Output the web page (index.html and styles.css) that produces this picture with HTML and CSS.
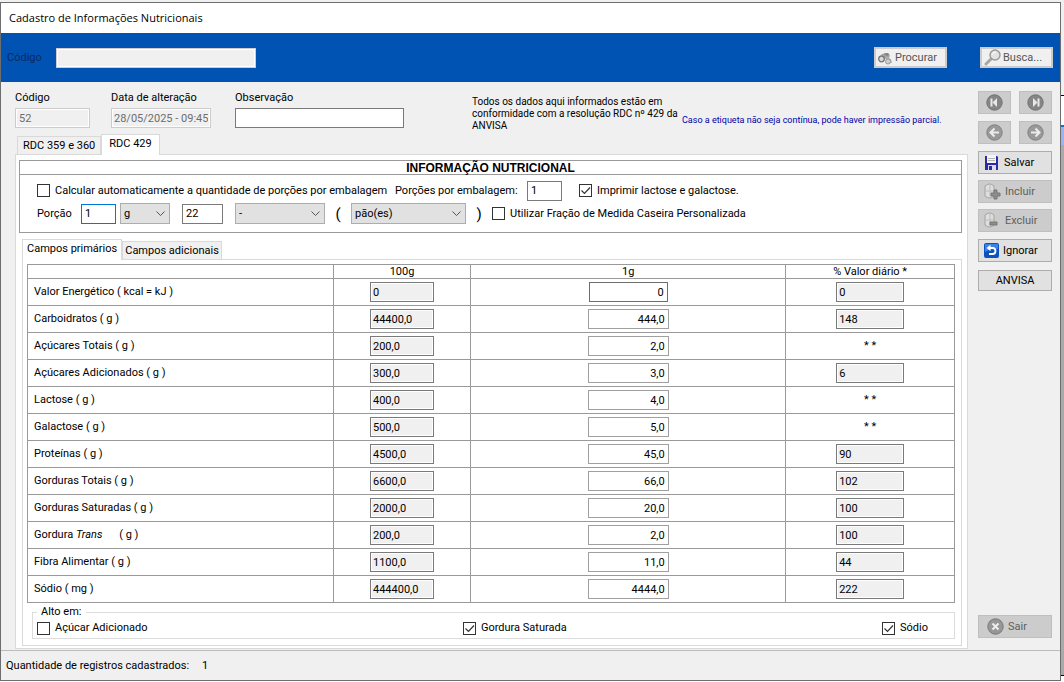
FILE: index.html
```
<!DOCTYPE html>
<html lang="pt-BR">
<head>
    <meta charset="UTF-8">
    <meta name="viewport" content="width=device-width, initial-scale=1.0">
    <title>Cadastro de Informações Nutricionais</title>
    <link rel="stylesheet" href="styles.css">
</head>
<body>
    <div class="window">
        <h1 class="title-bar">Cadastro de Informações Nutricionais</h1>

        <header class="search-bar">
            <label for="search-code">Código</label>
            <input class="field disabled search-input" id="search-code" type="text" disabled>
            <button class="search-button" type="button" disabled>
                <svg width="15" height="15" viewBox="0 0 15 15">
                    <path d="M1 7 L4 4 L9 3 L12 5 L11 8 L7 9 Z" fill="#a4a4a4"/>
                    <path d="M8 7 L13 9 L14 13 L8 13 Z" fill="#b4b4b4"/>
                    <circle cx="3.5" cy="9" r="2.800" fill="#dadada" stroke="#777" stroke-width="1.300"/>
                    <circle cx="10" cy="11.500" r="2.500" fill="#d0d0d0" stroke="#999"/>
                    <path d="M6 4 L11 4 M9 3 V6" stroke="#777"/>
                </svg>
                Procurar
            </button>
            <button class="search-button" type="button" disabled>
                <svg width="17" height="17" viewBox="0 0 17 17">
                    <path d="M2 15 L7 10" stroke="#a6a6a6" stroke-width="3" stroke-linecap="round"/>
                    <circle cx="11" cy="6" r="5" fill="#e2e2e2" stroke="#999" stroke-width="1.4"/>
                    <path d="M8 6 Q9 3 12 3" fill="none" stroke="#fff"/>
                </svg>
                Busca...
            </button>
        </header>

        <div class="content">
            <main class="main">
                <div class="record">
                    <div class="group group-code">
                        <label for="code">Código</label>
                        <input class="field disabled" id="code" type="text" value="52" disabled>
                    </div>
                    <div class="group group-date">
                        <label for="date">Data de alteração</label>
                        <input class="field disabled" id="date" type="text" value="28/05/2025 - 09:45" disabled>
                    </div>
                    <div class="group group-note">
                        <label for="note">Observação</label>
                        <input class="field" id="note" type="text">
                    </div>
                    <p class="legal">Todos os dados aqui informados estão em conformidade com a resolução RDC nº 429 da ANVISA</p>
                    <p class="warning">Caso a etiqueta não seja contínua, pode haver impressão parcial.</p>
                </div>

                <div class="tabs" role="tablist">
                    <button class="tab" type="button" role="tab">RDC 359 e 360</button>
                    <button class="tab active" type="button" role="tab" aria-selected="true">RDC 429</button>
                </div>

                <section class="panel">
                    <div class="info">
                        <h2>INFORMAÇÃO NUTRICIONAL</h2>
                        <div class="info-row">
                            <label class="check check-auto"><input type="checkbox">Calcular automaticamente a quantidade de porções por embalagem</label>
                            <label class="per-pack-label" for="per-pack">Porções por embalagem:</label>
                            <input class="field short" id="per-pack" type="text" value="1">
                            <label class="check check-print"><input type="checkbox" checked>Imprimir lactose e galactose.</label>
                        </div>
                        <div class="info-row">
                            <label class="portion-label" for="portion">Porção</label>
                            <input class="field short focused" id="portion" type="text" value="1">
                            <select class="unit" aria-label="Unidade"><option>g</option></select>
                            <input class="field amount" type="text" value="22" aria-label="Quantidade">
                            <select class="fraction" aria-label="Fração"><option>-</option></select>
                            <span class="paren">(</span>
                            <select class="measure" aria-label="Medida caseira"><option>pão(es)</option></select>
                            <span class="paren">)</span>
                            <label class="check check-fraction"><input type="checkbox">Utilizar Fração de Medida Caseira Personalizada</label>
                        </div>
                    </div>

                    <div class="tabs inner-tabs" role="tablist">
                        <button class="tab active" type="button" role="tab" aria-selected="true">Campos primários</button>
                        <button class="tab" type="button" role="tab">Campos adicionais</button>
                    </div>

                    <div class="panel inner-panel">
                        <table class="nutrients">
                            <colgroup>
                                <col class="col-name">
                                <col class="col-100">
                                <col class="col-portion">
                                <col class="col-daily">
                            </colgroup>
                            <thead>
                                <tr><th></th><th>100g</th><th>1g</th><th>% Valor diário *</th></tr>
                            </thead>
                            <tbody>
                                <tr>
                                    <th scope="row">Valor Energético ( kcal = kJ )</th>
                                    <td><input class="field readonly" value="0" aria-label="Valor energético 100g" readonly></td>
                                    <td><input class="field portion first" value="0" aria-label="Valor energético porção"></td>
                                    <td><input class="field readonly daily" value="0" aria-label="Valor energético diário" readonly></td>
                                </tr>
                                <tr>
                                    <th scope="row">Carboidratos ( g )</th>
                                    <td><input class="field readonly" value="44400,0" aria-label="Carboidratos 100g" readonly></td>
                                    <td><input class="field portion" value="444,0" aria-label="Carboidratos porção"></td>
                                    <td><input class="field readonly daily" value="148" aria-label="Carboidratos diário" readonly></td>
                                </tr>
                                <tr>
                                    <th scope="row">Açúcares Totais ( g )</th>
                                    <td><input class="field readonly" value="200,0" aria-label="Açúcares totais 100g" readonly></td>
                                    <td><input class="field portion" value="2,0" aria-label="Açúcares totais porção"></td>
                                    <td>* *</td>
                                </tr>
                                <tr>
                                    <th scope="row">Açúcares Adicionados ( g )</th>
                                    <td><input class="field readonly" value="300,0" aria-label="Açúcares adicionados 100g" readonly></td>
                                    <td><input class="field portion" value="3,0" aria-label="Açúcares adicionados porção"></td>
                                    <td><input class="field readonly daily" value="6" aria-label="Açúcares adicionados diário" readonly></td>
                                </tr>
                                <tr>
                                    <th scope="row">Lactose ( g )</th>
                                    <td><input class="field readonly" value="400,0" aria-label="Lactose 100g" readonly></td>
                                    <td><input class="field portion" value="4,0" aria-label="Lactose porção"></td>
                                    <td>* *</td>
                                </tr>
                                <tr>
                                    <th scope="row">Galactose ( g )</th>
                                    <td><input class="field readonly" value="500,0" aria-label="Galactose 100g" readonly></td>
                                    <td><input class="field portion" value="5,0" aria-label="Galactose porção"></td>
                                    <td>* *</td>
                                </tr>
                                <tr>
                                    <th scope="row">Proteínas ( g )</th>
                                    <td><input class="field readonly" value="4500,0" aria-label="Proteínas 100g" readonly></td>
                                    <td><input class="field portion" value="45,0" aria-label="Proteínas porção"></td>
                                    <td><input class="field readonly daily" value="90" aria-label="Proteínas diário" readonly></td>
                                </tr>
                                <tr>
                                    <th scope="row">Gorduras Totais ( g )</th>
                                    <td><input class="field readonly" value="6600,0" aria-label="Gorduras totais 100g" readonly></td>
                                    <td><input class="field portion" value="66,0" aria-label="Gorduras totais porção"></td>
                                    <td><input class="field readonly daily" value="102" aria-label="Gorduras totais diário" readonly></td>
                                </tr>
                                <tr>
                                    <th scope="row">Gorduras Saturadas ( g )</th>
                                    <td><input class="field readonly" value="2000,0" aria-label="Gorduras saturadas 100g" readonly></td>
                                    <td><input class="field portion" value="20,0" aria-label="Gorduras saturadas porção"></td>
                                    <td><input class="field readonly daily" value="100" aria-label="Gorduras saturadas diário" readonly></td>
                                </tr>
                                <tr>
                                    <th scope="row">Gordura <em>Trans</em> ( g )</th>
                                    <td><input class="field readonly" value="200,0" aria-label="Gordura trans 100g" readonly></td>
                                    <td><input class="field portion" value="2,0" aria-label="Gordura trans porção"></td>
                                    <td><input class="field readonly daily" value="100" aria-label="Gordura trans diário" readonly></td>
                                </tr>
                                <tr>
                                    <th scope="row">Fibra Alimentar ( g )</th>
                                    <td><input class="field readonly" value="1100,0" aria-label="Fibra alimentar 100g" readonly></td>
                                    <td><input class="field portion" value="11,0" aria-label="Fibra alimentar porção"></td>
                                    <td><input class="field readonly daily" value="44" aria-label="Fibra alimentar diário" readonly></td>
                                </tr>
                                <tr>
                                    <th scope="row">Sódio ( mg )</th>
                                    <td><input class="field readonly" value="444400,0" aria-label="Sódio 100g" readonly></td>
                                    <td><input class="field portion" value="4444,0" aria-label="Sódio porção"></td>
                                    <td><input class="field readonly daily" value="222" aria-label="Sódio diário" readonly></td>
                                </tr>
                            </tbody>
                        </table>

                        <fieldset class="high-in">
                            <legend>Alto em:</legend>
                            <div class="high-in-options">
                                <label class="check"><input type="checkbox">Açúcar Adicionado</label>
                                <label class="check"><input type="checkbox" checked>Gordura Saturada</label>
                                <label class="check"><input type="checkbox" checked>Sódio</label>
                            </div>
                        </fieldset>
                    </div>
                </section>
            </main>

            <aside class="sidebar">
                <div class="nav">
                    <button class="action" type="button" aria-label="Primeiro" disabled>
                        <svg width="17" height="17" viewBox="0 0 17 17">
                            <circle cx="8.5" cy="8.5" r="7.7" fill="#858585" stroke="#727272"/>
                            <path d="M5.5 4.5 V12.5" stroke="#e8e8e8" stroke-width="2"/>
                            <path d="M11 4 V13 L6.500 8.5 Z" fill="#e8e8e8"/>
                        </svg>
                    </button>
                    <button class="action" type="button" aria-label="Último" disabled>
                        <svg width="17" height="17" viewBox="0 0 17 17">
                            <circle cx="8.5" cy="8.5" r="7.7" fill="#858585" stroke="#727272"/>
                            <path d="M11.5 4.5 V12.5" stroke="#e8e8e8" stroke-width="2"/>
                            <path d="M6 4 V13 L10.500 8.5 Z" fill="#e8e8e8"/>
                        </svg>
                    </button>
                    <button class="action" type="button" aria-label="Anterior" disabled>
                        <svg width="17" height="17" viewBox="0 0 17 17">
                            <circle cx="8.5" cy="8.5" r="7.7" fill="#999" stroke="#808080"/>
                            <path d="M13 8.5 H5 M8.5 4.5 L4.5 8.5 L8.5 12.5" fill="none" stroke="#ececec" stroke-width="2"/>
                        </svg>
                    </button>
                    <button class="action" type="button" aria-label="Próximo" disabled>
                        <svg width="17" height="17" viewBox="0 0 17 17">
                            <circle cx="8.5" cy="8.5" r="7.7" fill="#999" stroke="#808080"/>
                            <path d="M4 8.5 H12 M8.5 4.5 L12.5 8.5 L8.5 12.5" fill="none" stroke="#ececec" stroke-width="2"/>
                        </svg>
                    </button>
                </div>
                <button class="action" type="button">
                    <svg width="16" height="16" viewBox="0 0 16 16">
                        <path d="M1 1 H13 L14 2 V15 H1 Z" fill="#2b2ba6"/>
                        <path d="M3 0 H12 V8 H3 Z" fill="#f4f4f4"/>
                        <path d="M4 3.5 H11 M4 5.5 H11" stroke="#b5b5b5"/>
                        <path d="M4 10 H12 V15 H4 Z" fill="#dcdcec"/>
                        <path d="M5 11 H8 V15 H5 Z" fill="#2b2ba6"/>
                    </svg>
                    Salvar
                </button>
                <button class="action" type="button" disabled>
                    <svg width="17" height="17" viewBox="0 0 17 17">
                        <path d="M1 3 Q5.500 -1 10 3 V13 Q5.500 17 1 13 Z" fill="#dedede" stroke="#a2a2a2"/>
                        <path d="M1 8 H10 M6 2 V14" stroke="#bcbcbc"/>
                        <path d="M10 7 H13 V10 H16 V13 H13 V16 H10 V13 H7 V10 H10 Z" fill="#8d8d8d" stroke="#777"/>
                    </svg>
                    Incluir
                </button>
                <button class="action" type="button" disabled>
                    <svg width="17" height="17" viewBox="0 0 17 17">
                        <path d="M1 3 Q5.500 -1 10 3 V13 Q5.500 17 1 13 Z" fill="#dedede" stroke="#a2a2a2"/>
                        <path d="M1 8 H10 M6 2 V14" stroke="#bcbcbc"/>
                        <path d="M6 10 H13 V13 H6 Z" fill="#8d8d8d" stroke="#777"/>
                    </svg>
                    Excluir
                </button>
                <button class="action action-ignore" type="button">
                    <svg width="15" height="15" viewBox="0 0 15 15">
                        <rect width="15" height="15" rx="2" fill="#0c51c0"/>
                        <path d="M1 1 H14 V6 Q7 5 1 9 Z" fill="#3a83e8"/>
                        <path d="M4 5 H8.500 Q11.500 5 11.500 8 T8.500 11 H5" fill="none" stroke="#fff" stroke-width="1.800"/>
                        <path d="M2.500 5 L6.500 1.800 V8.200 Z" fill="#fff"/>
                    </svg>
                    Ignorar
                </button>
                <button class="action action-anvisa" type="button">ANVISA</button>
                <button class="action action-exit" type="button" disabled>
                    <svg width="17" height="17" viewBox="0 0 17 17">
                        <circle cx="8.5" cy="8.5" r="7.7" fill="#979797" stroke="#777"/>
                        <path d="M5.500 5.500 L11.500 11.500 M11.500 5.500 L5.500 11.500" stroke="#eee" stroke-width="2"/>
                    </svg>
                    Sair
                </button>
            </aside>
        </div>

        <footer class="status-bar">
            <span>Quantidade de registros cadastrados:</span>
            <span>1</span>
        </footer>
    </div>
</body>
</html>
```
FILE: styles.css
```
* {
    box-sizing: border-box;
}

body {
    margin: 0;
    padding: 2px 3px 1px 0;
    height: 100vh;
    font-family: Roboto, "Liberation Sans", Arial, sans-serif;
    font-size: 11px;
    line-height: 14px;
    color: #000;
    background: linear-gradient(#f0f0f0 95px, #000 95px, #000 96px, #fff 96px, #fff 125px, #0078d7 125px, #0078d7 127px, #99b4f0 127px, #99b4f0 145px, #aaa 145px, #aaa 675px, #000 675px, #000 676px, #fff 676px);
}

h1, h2, p {
    margin: 0;
}

button, input, select {
    font-family: inherit;
    font-size: 11px;
    color: inherit;
}

svg {
    flex: none;
}

.window {
    display: flex;
    flex-direction: column;
    min-height: 100%;
    background-color: #f0f0f0;
    border: 1px solid #6e6e6e;
}

.title-bar {
    height: 30px;
    padding-left: 8px;
    line-height: 30px;
    font-family: "Open Sans", "Noto Sans", sans-serif;
    font-size: 11px;
    font-weight: normal;
    background-color: #fff;
}

/* inputs */
.field {
    width: 100%;
    height: 20px;
    padding: 0 3px;
    border: 1px solid #7a7a7a;
    border-radius: 0;
    background-color: #fff;
    outline: none;
}

.disabled {
    border-color: #ccc;
    background-color: #f0f0f0;
    box-shadow: inset 0 0 0 1px #fff;
    color: #6d6d6d;
}

.focused {
    border-color: #0078d7;
}

.short {
    width: 35px;
}

.amount {
    width: 41px;
}

select {
    appearance: none;
    height: 21px;
    padding: 0 3px;
    border: 1px solid #adadad;
    border-radius: 0;
    background: #e1e1e1 url("data:image/svg+xml,%3Csvg xmlns='http://www.w3.org/2000/svg' width='9' height='6'%3E%3Cpath d='M0.5 0.5L4.5 4.500L8.5 0.5' fill='none' stroke='%23555'/%3E%3C/svg%3E") no-repeat right 4px center;
}

.check {
    display: flex;
    align-items: center;
    gap: 5px;
    white-space: nowrap;
}

.check input {
    appearance: none;
    width: 13px;
    height: 13px;
    margin: 0;
    border: 1px solid #333;
    background-color: #fff;
}

.check input:checked {
    background-image: url("data:image/svg+xml,%3Csvg xmlns='http://www.w3.org/2000/svg' width='11' height='11'%3E%3Cpath d='M1.500 5.500L4.500 8.500L10 2.500' fill='none' stroke='%23333' stroke-width='1.200'/%3E%3C/svg%3E");
}

/* blue bar */
.search-bar {
    display: flex;
    align-items: center;
    height: 49px;
    padding: 0 7px 0 6px;
    background-color: #0053b3;
    color: #0b2a5c;
}

.search-bar label {
    width: 49px;
}

.search-input {
    width: 200px;
    margin-right: auto;
}

.search-button {
    display: flex;
    align-items: center;
    gap: 2px;
    width: 73px;
    height: 21px;
    margin-left: 33px;
    padding: 0 2px;
    border: 2px solid #ccc;
    background-color: #f0f0f0;
    color: #555;
    white-space: nowrap;
}

.content {
    display: flex;
    flex: 1;
    gap: 10px;
    padding: 9px 8px 0 14px;
}

.main {
    flex: 1;
}

/* record data */
.record {
    display: flex;
    align-items: flex-start;
    height: 43px;
}

.group {
    display: flex;
    flex-direction: column;
    gap: 3px;
}

.group-code {
    width: 75px;
    margin-right: 21px;
}

.group-date {
    width: 100px;
    margin-right: 24px;
}

.group-date .field {
    padding: 0 2px;
}

.group-note {
    width: 169px;
    margin-right: 68px;
}

.legal {
    flex: none;
    width: 208px;
    margin-top: 5px;
    margin-right: 2px;
    font-size: 10px;
    line-height: 12px;
}

.warning {
    margin-top: 22px;
    font-size: 9px;
    white-space: nowrap;
    color: #0000a8;
}

/* tabs */
.tabs {
    display: flex;
    align-items: flex-end;
    padding-left: 2px;
}

.tab {
    height: 18px;
    padding: 0 5px;
    border: 1px solid #d9d9d9;
    border-bottom: 0;
    background-color: #f0f0f0;
}

.tab.active {
    z-index: 1;
    height: 21px;
    margin-bottom: -1px;
    padding: 0 7px 3px;
    background-color: #fff;
}

.panel {
    padding: 5px 5px 2px 3px;
    border: 1px solid #d9d9d9;
    background-color: #fff;
}

.info {
    height: 73px;
    border: 1px solid #9a9a9a;
}

.info h2 {
    height: 14px;
    margin-bottom: 4px;
    border-bottom: 1px solid #9a9a9a;
    font-family: "Liberation Sans", Arial, sans-serif;
    font-size: 12px;
    line-height: 14px;
    text-align: center;
}

.info-row {
    display: flex;
    align-items: center;
    height: 23px;
    padding-left: 17px;
    white-space: nowrap;
}

.check-auto {
    width: 358px;
}

.per-pack-label {
    width: 132px;
}

.check-print {
    margin-left: 17px;
}

.portion-label {
    width: 44px;
}

.unit {
    width: 50px;
    margin: 0 12px 0 4px;
}

.fraction {
    width: 90px;
    margin-left: 12px;
}

.measure {
    width: 115px;
}

.paren {
    width: 26px;
    font-size: 15px;
    text-align: center;
}

.inner-tabs {
    margin-top: 6px;
    padding-left: 3px;
}

.inner-tabs .tab {
    padding: 0 2px;
}

.inner-tabs .tab.active {
    padding: 0 4px 3px;
}

.inner-panel {
    margin-left: 3px;
    padding: 4px 6px 6px 4px;
}

/* nutrients */
.nutrients {
    width: 100%;
    border-collapse: collapse;
    table-layout: fixed;
}

.col-name {
    width: 33%;
}

.col-100 {
    width: 14.8%;
}

.col-portion {
    width: 34%;
}

.col-daily {
    width: 18.2%;
}

.nutrients th, .nutrients td {
    height: 27px;
    padding: 0;
    border: 1px solid #9a9a9a;
    font-weight: normal;
    text-align: center;
}

.nutrients thead th {
    height: 14px;
    line-height: 13px;
}

.nutrients tbody th {
    padding-left: 6px;
    text-align: left;
}

.nutrients em {
    margin-right: 14px;
}

.nutrients .field {
    display: block;
    width: 64px;
    margin: 0 auto;
}

.nutrients .readonly {
    padding: 0 2px;
    background-color: #f0f0f0;
    box-shadow: inset 0 0 0 1px #fff;
}

.nutrients .daily {
    width: 68px;
}

.nutrients .portion {
    width: 81px;
    border-color: #a0a0a0;
    text-align: right;
}

.nutrients .first {
    width: 79px;
    border-color: #6e6e6e;
}

.high-in {
    height: 34px;
    margin: 2px 0 0 5px;
    padding: 2px 26px 0 4px;
    border: 1px solid #dcdcdc;
}

.high-in legend {
    padding: 0 4px;
}

.high-in-options {
    display: flex;
    justify-content: space-between;
}

/* side buttons */
.sidebar {
    display: flex;
    flex-direction: column;
    gap: 6px;
    width: 74px;
    padding-bottom: 11px;
}

.nav {
    display: grid;
    grid-template-columns: 33px 33px;
    gap: 7px;
    justify-content: space-between;
    margin-bottom: 1px;
}

.action {
    display: flex;
    align-items: center;
    gap: 4px;
    height: 23px;
    padding: 0 5px;
    border: 1px solid #adadad;
    background-color: #e1e1e1;
}

.action:disabled {
    border-color: #bfbfbf;
    background-color: #ccc;
    color: #606060;
}

.nav .action {
    justify-content: center;
}

.action-ignore {
    margin-top: 1px;
}

.action-anvisa {
    justify-content: center;
    height: 21px;
    margin-top: 2px;
}

.action-exit {
    margin-top: auto;
    padding-left: 8px;
}

.status-bar {
    display: flex;
    gap: 13px;
    height: 30px;
    margin-top: 1px;
    padding-left: 5px;
    border-top: 1px solid #bcbcbc;
    line-height: 29px;
}
```
